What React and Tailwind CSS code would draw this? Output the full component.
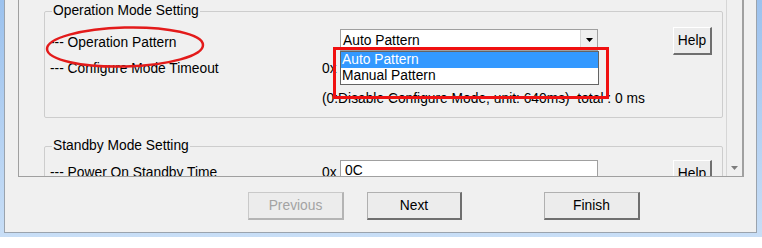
import React from 'react'

const WinButton = ({ children, disabled, className = '' }) => (
  <button
    className={`h-[28px] flex items-center justify-center border border-r-2 border-b-2 bg-[#ececec] ${
      disabled
        ? 'border-[#c9c9c9] border-r-[#b4b4b4] border-b-[#b4b4b4] text-[#a3a3a3]'
        : 'border-[#b0b0b0] border-r-[#6f6f6f] border-b-[#6f6f6f] text-black'
    } ${className}`}
  >
    {children}
  </button>
)

export default function App() {
  return (
    <div className="relative w-[762px] h-[248px] bg-white overflow-hidden font-['Liberation_Sans',Arial,sans-serif] text-[13.8px] leading-[16px] text-black">
      {/* window frame */}
      <div className="h-[237px] pl-[4px] pr-[5px] pb-[4px] bg-linear-to-b from-[#9cc2ee] to-[#c8def6]">
        <div className="h-[233px] bg-[#f0f0f0] border-l border-r border-b border-[#9aa3ad] flex flex-col">
          {/* scroll panel */}
          <div className="ml-[13px] w-[726px] h-[177px] border-l border-b border-r-2 border-[#a0a0a0] flex overflow-hidden">
            <div className="w-[707px] shrink-0">
              <fieldset className="ml-[25px] w-[679px] mt-[3px] p-0 pb-[10px] border border-[#cdcdcd] rounded-[2px]">
                <legend className="ml-[7px] px-[1px]">Operation Mode Setting</legend>

                <div className="flex items-start h-[28px] mt-[8px] pl-[5px]">
                  <div className="w-[272px] mt-[8px]">--- Operation Pattern</div>
                  <div className="w-[18px]" />
                  <div className="relative w-[258px] mt-[2px] h-[22px] border border-[#a0a0a0] bg-white flex">
                    <div className="flex-1 pl-[2px] pt-[2px] leading-[18px]">Auto Pattern</div>
                    <div className="w-[17px] bg-[#efefef] border-l border-[#d4d4d4] flex items-center justify-center">
                      <svg width="7" height="4" viewBox="0 0 7 4">
                        <polygon points="0,0 7,0 3.5,4" fill="#000" />
                      </svg>
                    </div>
                    {/* open dropdown list */}
                    <div className="absolute top-[21px] left-[-1px] w-[259px] z-10 border border-[#646464] bg-white">
                      <div className="h-[16px] bg-[#3399ff] text-white pl-[1px]">Auto Pattern</div>
                      <div className="h-[16px] pl-[1px]">Manual Pattern</div>
                    </div>
                  </div>
                  <div className="w-[75px]" />
                  <WinButton className="w-[39px] border-t-white border-l-white">Help</WinButton>
                </div>

                <div className="flex items-center h-[22px] mt-[3px] pl-[5px]">
                  <div className="w-[272px]">--- Configure Mode Timeout</div>
                  <div className="w-[18px]">0x</div>
                  <div className="w-[258px] h-[22px] border border-[#a0a0a0] bg-white" />
                </div>

                <div className="mt-[11px] pl-[277px] whitespace-pre">(0:Disable Configure Mode, unit: 640ms)  total : 0 ms</div>
              </fieldset>

              <fieldset className="ml-[25px] w-[679px] mt-[20px] p-0 pb-[10px] border border-[#cdcdcd] rounded-[2px]">
                <legend className="ml-[7px] px-[1px]">Standby Mode Setting</legend>
                <div className="flex items-start h-[28px] mt-[6px] pl-[5px]">
                  <div className="w-[272px] mt-[5px]">--- Power On Standby Time</div>
                  <div className="w-[18px] mt-[5px]">0x</div>
                  <div className="w-[258px] h-[22px] border border-[#a0a0a0] bg-white pl-[4px] leading-[20px]">0C</div>
                  <div className="w-[75px]" />
                  <WinButton className="w-[39px] border-t-white border-l-white">Help</WinButton>
                </div>
              </fieldset>
            </div>

            {/* scrollbar */}
            <div className="w-[16px] shrink-0 border-l border-[#d6d6d6] flex flex-col justify-end">
              <div className="h-[17px] flex items-center justify-center">
                <svg width="7" height="4" viewBox="0 0 7 4">
                  <polygon points="0,0 7,0 3.5,4" fill="#7d7d7d" />
                </svg>
              </div>
            </div>
          </div>

          {/* wizard buttons */}
          <div className="flex mt-[15px] ml-[243px]">
            <WinButton disabled className="w-[96px]">Previous</WinButton>
            <WinButton className="w-[95px] ml-[23px]">Next</WinButton>
            <WinButton className="w-[96px] ml-[82px]">Finish</WinButton>
          </div>
        </div>
      </div>

      {/* annotations */}
      <svg className="absolute left-[44px] top-[24px] pointer-events-none z-20" width="162" height="46" viewBox="0 0 162 46">
        <ellipse cx="81" cy="23" rx="78" ry="19.5" fill="none" stroke="#e31b1b" strokeWidth="2.5" transform="rotate(-1.5 81 23)" />
      </svg>
      <div className="absolute left-[333px] top-[47px] w-[276px] h-[52px] border-[3px] border-[#f01010] pointer-events-none z-20" />
    </div>
  )
}
